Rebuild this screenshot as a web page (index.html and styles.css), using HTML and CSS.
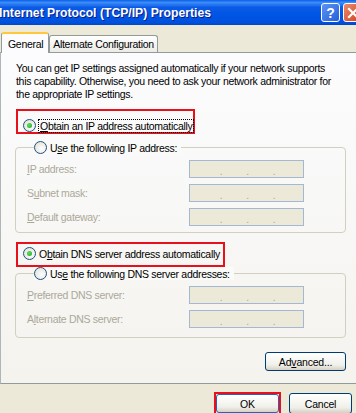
FILE: index.html
```html
<!DOCTYPE html>
<html lang="en">
<head>
  <meta charset="UTF-8">
  <title>Internet Protocol (TCP/IP) Properties</title>
  <link rel="stylesheet" href="styles.css">
</head>
<body>
  <div class="window">
    <!-- Title bar -->
    <div class="titlebar">
      <span class="title">Internet Protocol (TCP/IP) Properties</span>
      <div class="caption-buttons">
        <div class="cap-btn help">?</div>
        <div class="cap-btn close">
          <svg width="12" height="12" viewBox="0 0 12 12"><path d="M2 2 L10 10 M10 2 L2 10" stroke="#fff" stroke-width="2.2" stroke-linecap="square"/></svg>
        </div>
      </div>
    </div>

    <!-- Tabs -->
    <div class="tabstrip">
      <div class="tab active">General</div>
      <div class="tab">Alternate Configuration</div>
    </div>

    <div class="panel">
      <p class="intro">You can get IP settings assigned automatically if your network supports this capability. Otherwise, you need to ask your network administrator for the appropriate IP settings.</p>

      <div class="highlight first">
        <label class="radio-row"><span class="radio checked"></span><span class="focus"><u>O</u>btain an IP address automatically</span></label>
      </div>

      <div class="group ip-group">
        <label class="radio-row legend"><span class="radio"></span><span>U<u>s</u>e the following IP address:</span></label>
        <div class="field"><span class="field-label"><u>I</u>P address:</span><span class="ipbox"><i>.</i><i>.</i><i>.</i></span></div>
        <div class="field"><span class="field-label">S<u>u</u>bnet mask:</span><span class="ipbox"><i>.</i><i>.</i><i>.</i></span></div>
        <div class="field"><span class="field-label"><u>D</u>efault gateway:</span><span class="ipbox"><i>.</i><i>.</i><i>.</i></span></div>
      </div>

      <div class="highlight second">
        <label class="radio-row"><span class="radio checked"></span><span>O<u>b</u>tain DNS server address automatically</span></label>
      </div>

      <div class="group dns-group">
        <label class="radio-row legend"><span class="radio"></span><span>Us<u>e</u> the following DNS server addresses:</span></label>
        <div class="field"><span class="field-label"><u>P</u>referred DNS server:</span><span class="ipbox"><i>.</i><i>.</i><i>.</i></span></div>
        <div class="field"><span class="field-label">A<u>l</u>ternate DNS server:</span><span class="ipbox"><i>.</i><i>.</i><i>.</i></span></div>
      </div>

      <div class="advanced-row">
        <button class="xp-btn advanced">Ad<u>v</u>anced...</button>
      </div>
    </div>

    <div class="footer">
      <div class="ok-wrap"><button class="xp-btn ok">OK</button></div>
      <button class="xp-btn cancel">Cancel</button>
    </div>
  </div>
</body>
</html>
```

FILE: styles.css
```css
body {
  margin: 0;
  padding: 0;
  background: #ECE9D8;
  font-family: 'Liberation Sans', Tahoma, sans-serif;
  font-size: 10.5px;
  letter-spacing: -0.3px;
  color: #000;
  width: 356px;
  height: 413px;
  overflow: hidden;
}

.window {
  width: 364px;
}

/* Title bar */
.titlebar {
  height: 25px;
  display: flex;
  align-items: center;
  justify-content: space-between;
  background: linear-gradient(#0A5FE8 0%, #3B8CF7 10%, #0A5AE6 30%, #0055E5 60%, #0050DD 90%, #0046C8 100%);
}

.title {
  color: #fff;
  font-weight: 700;
  font-size: 12.2px;
  letter-spacing: 0;
  margin-left: -1px;
  text-shadow: 1px 1px 0 #0A1C8C;
  white-space: nowrap;
}

.caption-buttons {
  display: flex;
  gap: 3px;
  padding-right: 2px;
}

.cap-btn {
  width: 17px;
  height: 17px;
  border: 1px solid #fff;
  border-radius: 3px;
  display: flex;
  align-items: center;
  justify-content: center;
  color: #fff;
  font-weight: 700;
  font-size: 14px;
}

.help {
  background: linear-gradient(135deg, #5E93F2, #2460DD);
}

.close {
  background: linear-gradient(135deg, #E98B6C, #D8401C);
}

/* Tabs */
.tabstrip {
  height: 27px;
  display: flex;
  align-items: flex-end;
  padding-left: 1px;
}

.tab {
  height: 16px;
  padding: 0 3px;
  border: 1px solid #919B9C;
  border-bottom: none;
  border-radius: 3px 3px 0 0;
  background: linear-gradient(#FFFFFF, #ECEBE5);
  line-height: 17px;
  white-space: nowrap;
}

.tab.active {
  height: 19px;
  line-height: 20px;
  padding: 0 5px 0 6px;
  background: #FCFCFE;
  border-top: 2px solid #FFC83C;
  margin-bottom: -1px;
  position: relative;
  z-index: 1;
}

/* Panel */
.panel {
  height: 332px;
  box-sizing: border-box;
  border: 1px solid #919B9C;
  border-left-color: #AFB6B7;
  width: 360px;
  background: linear-gradient(#FCFCFE, #F4F3EE);
  padding: 9px 0 0 14px;
}

.intro {
  margin: 0;
  width: 322px;
  line-height: 13px;
  padding-left: 1px;
}

.highlight {
  border: 2px solid #E8101A;
  box-sizing: border-box;
  height: 25px;
  width: fit-content;
  display: flex;
  align-items: flex-end;
  margin-left: 1px;
}

.highlight.first {
  padding: 0 0 0 5px;
  margin-top: 8px;
}

.highlight.second {
  padding: 0 3px 5px 5px;
  margin-top: 9px;
}

.radio-row {
  display: flex;
  align-items: center;
  gap: 3px;
  white-space: nowrap;
  height: 13px;
}

.radio {
  width: 11px;
  height: 11px;
  border: 1px solid #1C5180;
  border-radius: 50%;
  background: radial-gradient(circle at 60% 60%, #FFFFFF, #DCDAD0);
  display: flex;
  align-items: center;
  justify-content: center;
  flex-shrink: 0;
}

.radio.checked::after {
  content: "";
  width: 5px;
  height: 5px;
  border-radius: 50%;
  background: radial-gradient(circle at 40% 40%, #5BE25B, #21A121);
}

.focus {
  outline: 1px dotted #000;
  padding: 0 1px;
}

/* Group boxes */
.group {
  width: 331px;
  box-sizing: border-box;
  border: 1px solid #D0D0BF;
  border-radius: 4px;
  padding: 0 0 0 11px;
}

.ip-group {
  margin-top: 13px;
  height: 86px;
}

.dns-group {
  margin-top: 6px;
  height: 65px;
}

.legend {
  margin: -7px 0 0 7px;
  padding-right: 4px;
  width: fit-content;
  background: #FAFAF8;
}

.field {
  display: flex;
  align-items: center;
  margin-top: 6px;
  height: 18px;
}

.field-label {
  color: #ACA899;
  width: 162px;
}

.ipbox {
  width: 115px;
  height: 18px;
  box-sizing: border-box;
  border: 1px solid #A3B8D2;
  background: #ECE9D8;
  display: flex;
  justify-content: center;
  gap: 24px;
  padding-left: 2px;
  line-height: 21px;
  color: #ACA899;
}

.ipbox i {
  font-style: normal;
  font-size: 10px;
}

/* Buttons */
.xp-btn {
  font-family: 'Liberation Sans', Tahoma, sans-serif;
  font-size: 10.5px;
  letter-spacing: -0.2px;
  color: #000;
  border: 1px solid #003C74;
  border-radius: 3px;
  background: linear-gradient(#FFFFFF, #F0F0EA 70%, #D6D0C5);
  height: 19px;
  padding: 0;
}

.advanced-row {
  display: flex;
  justify-content: flex-end;
  width: 331px;
  margin-top: 14px;
}

.advanced {
  width: 81px;
}

.footer {
  display: flex;
  align-items: flex-start;
  padding: 8px 0 0 214px;
  gap: 8px;
}

.ok-wrap {
  border: 2px solid #E8101A;
}

.ok {
  width: 63px;
  height: 19px;
  border-color: #2E5EB8;
}

.cancel {
  width: 63px;
  height: 21px;
  margin-top: 1px;
}
```
